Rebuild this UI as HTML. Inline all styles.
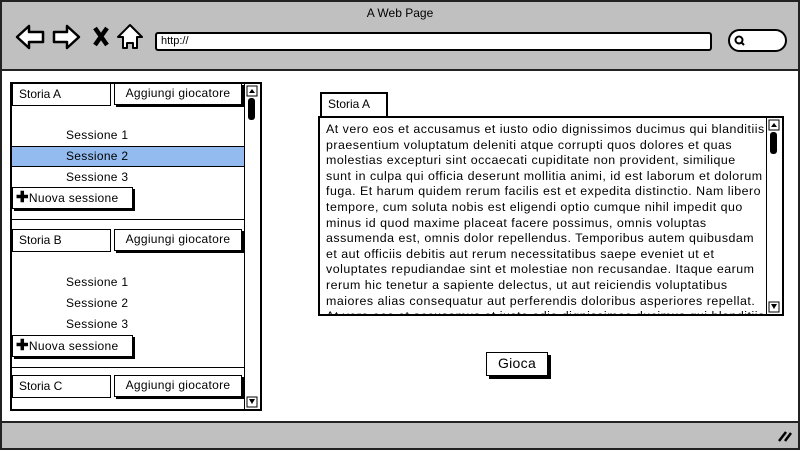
<!DOCTYPE html>
<html><head><style>
*{margin:0;padding:0;box-sizing:border-box}
body{width:800px;height:450px;overflow:hidden;background:#fff;font-family:"Liberation Sans",sans-serif;font-size:12px;color:#000;position:relative}
.a{position:absolute}
.box{position:absolute;border:2px solid #000;background:#fff}
.btn{position:absolute;border:1.5px solid #000;background:#fff;box-shadow:2px 2px 0 #000;font-size:12px;line-height:19px;text-align:center;letter-spacing:0.3px}
.tab{position:absolute;border:1.5px solid #000;border-bottom:none;background:#fff;font-size:12px;padding-left:6px;line-height:20px}
.s{position:absolute;left:66px;font-size:12px;letter-spacing:0.3px}
.sb{position:absolute;border-left:1.5px solid #000;background:#fff}
</style></head><body>
<div class="a" style="left:0;top:0;width:800px;height:450px;border:2px solid #222"></div>
<div class="a" style="left:2px;top:2px;width:796px;height:69px;background:#c0c0c0;border-bottom:2px solid #222"></div>
<div class="a" style="left:0;top:6px;width:800px;text-align:center;font-size:12px">A Web Page</div>
<svg class="a" style="left:0;top:0" width="160" height="60">
<path d="M17 37 L29 26 L29 32 L43 32 L43 42 L29 42 L29 48 Z" fill="#fff" stroke="#000" stroke-width="2.5" stroke-linejoin="round"/>
<path d="M79 37 L67 26 L67 32 L54 32 L54 42 L67 42 L67 48 Z" fill="#fff" stroke="#000" stroke-width="2.5" stroke-linejoin="round"/>
<path d="M95 28 L107 45 M107 28 L95 45" stroke="#000" stroke-width="4.5"/>
<path d="M130 25 L142 37 L137 37 L137 48 L133 48 L133 43 L127 43 L127 48 L123 48 L123 37 L118 37 Z" fill="#fff" stroke="#000" stroke-width="2" stroke-linejoin="round"/>
</svg>
<div class="a" style="left:155px;top:32px;width:557px;height:19px;background:#fff;border:2px solid #000;border-radius:3px;font-size:11px;padding-left:4px;line-height:15px">http://</div>
<div class="a" style="left:728px;top:29px;width:59px;height:23px;background:#fff;border:2px solid #000;border-radius:12px"></div>
<svg class="a" style="left:733px;top:35px" width="14" height="12"><circle cx="6" cy="5" r="3.5" fill="none" stroke="#000" stroke-width="2"/><path d="M8 7 L11 10" stroke="#000" stroke-width="2"/></svg>
<div class="a" style="left:2px;top:421px;width:796px;height:27px;background:#c0c0c0;border-top:2px solid #222"></div>
<svg class="a" style="left:776px;top:428px" width="18" height="16"><path d="M3 13 L10 4 M9 13 L15 5" stroke="#000" stroke-width="2.5"/></svg>

<!-- left panel -->
<div class="box" style="left:10px;top:82px;width:252px;height:329px"></div>
<div class="tab" style="left:12px;top:83px;width:99px;height:23px;border-bottom:1.5px solid #000">Storia A</div>
<div class="btn" style="left:114px;top:83px;width:128px;height:22px">Aggiungi giocatore</div>
<div class="a" style="left:12px;top:146px;width:232px;height:21px;background:#93bbef;border-top:1px solid #000;border-bottom:1px solid #000"></div>
<div class="s" style="top:128px">Sessione 1</div>
<div class="s" style="top:149px">Sessione 2</div>
<div class="s" style="top:170px">Sessione 3</div>
<div class="btn" style="left:12px;top:187px;width:121px;height:22px;text-align:left;padding-left:3px"><b style="font-size:15px">✚</b>Nuova sessione</div>
<div class="a" style="left:12px;top:219px;width:232px;border-top:1.5px solid #000"></div>

<div class="tab" style="left:12px;top:229px;width:99px;height:23px;border-bottom:1.5px solid #000">Storia B</div>
<div class="btn" style="left:114px;top:229px;width:128px;height:22px">Aggiungi giocatore</div>
<div class="s" style="top:275px">Sessione 1</div>
<div class="s" style="top:296px">Sessione 2</div>
<div class="s" style="top:317px">Sessione 3</div>
<div class="btn" style="left:12px;top:335px;width:121px;height:22px;text-align:left;padding-left:3px"><b style="font-size:15px">✚</b>Nuova sessione</div>
<div class="a" style="left:12px;top:367px;width:232px;border-top:1.5px solid #000"></div>
<div class="tab" style="left:12px;top:375px;width:99px;height:23px;border-bottom:1.5px solid #000">Storia C</div>
<div class="btn" style="left:114px;top:375px;width:128px;height:22px">Aggiungi giocatore</div>

<div class="sb" style="left:244px;top:84px;width:16px;height:325px"></div>
<svg class="a" style="left:245px;top:84px" width="15" height="325">
<rect x="2" y="2" width="10" height="10" fill="#fff" stroke="#000"/><path d="M4 9 L7 5 L10 9Z"/>
<rect x="3" y="14" width="7" height="22" rx="3"/>
<rect x="2" y="313" width="10" height="10" fill="#fff" stroke="#000"/><path d="M4 315 L7 320 L10 315Z"/>
</svg>

<!-- right -->
<div class="tab" style="left:320px;top:92px;width:68px;height:24px;border:2px solid #000;border-bottom:none">Storia A</div>
<div class="box" style="left:318px;top:116px;width:466px;height:200px;overflow:hidden">
<div style="position:absolute;left:6px;top:4px;font-size:12.4px;line-height:15.6px;white-space:nowrap;letter-spacing:0.5px">At vero eos et accusamus et iusto odio dignissimos ducimus qui blanditiis<br>praesentium voluptatum deleniti atque corrupti quos dolores et quas<br>molestias excepturi sint occaecati cupiditate non provident, similique<br>sunt in culpa qui officia deserunt mollitia animi, id est laborum et dolorum<br>fuga. Et harum quidem rerum facilis est et expedita distinctio. Nam libero<br>tempore, cum soluta nobis est eligendi optio cumque nihil impedit quo<br>minus id quod maxime placeat facere possimus, omnis voluptas<br>assumenda est, omnis dolor repellendus. Temporibus autem quibusdam<br>et aut officiis debitis aut rerum necessitatibus saepe eveniet ut et<br>voluptates repudiandae sint et molestiae non recusandae. Itaque earum<br>rerum hic tenetur a sapiente delectus, ut aut reiciendis voluptatibus<br>maiores alias consequatur aut perferendis doloribus asperiores repellat.<br>At vero eos et accusamus et iusto odio dignissimos ducimus qui blanditiis</div>
<div class="sb" style="left:446px;top:0;width:16px;height:196px"></div>
<svg class="a" style="left:447px;top:0" width="15" height="196">
<rect x="2" y="2" width="10" height="10" fill="#fff" stroke="#000"/><path d="M4 9 L7 5 L10 9Z"/>
<rect x="3" y="14" width="7" height="22" rx="3"/>
<rect x="2" y="184" width="10" height="10" fill="#fff" stroke="#000"/><path d="M4 186 L7 191 L10 186Z"/>
</svg>
</div>
<div class="btn" style="left:486px;top:352px;width:62px;height:24px;font-size:14px;line-height:21px;box-shadow:3px 3px 0 #000">Gioca</div>
</body></html>
